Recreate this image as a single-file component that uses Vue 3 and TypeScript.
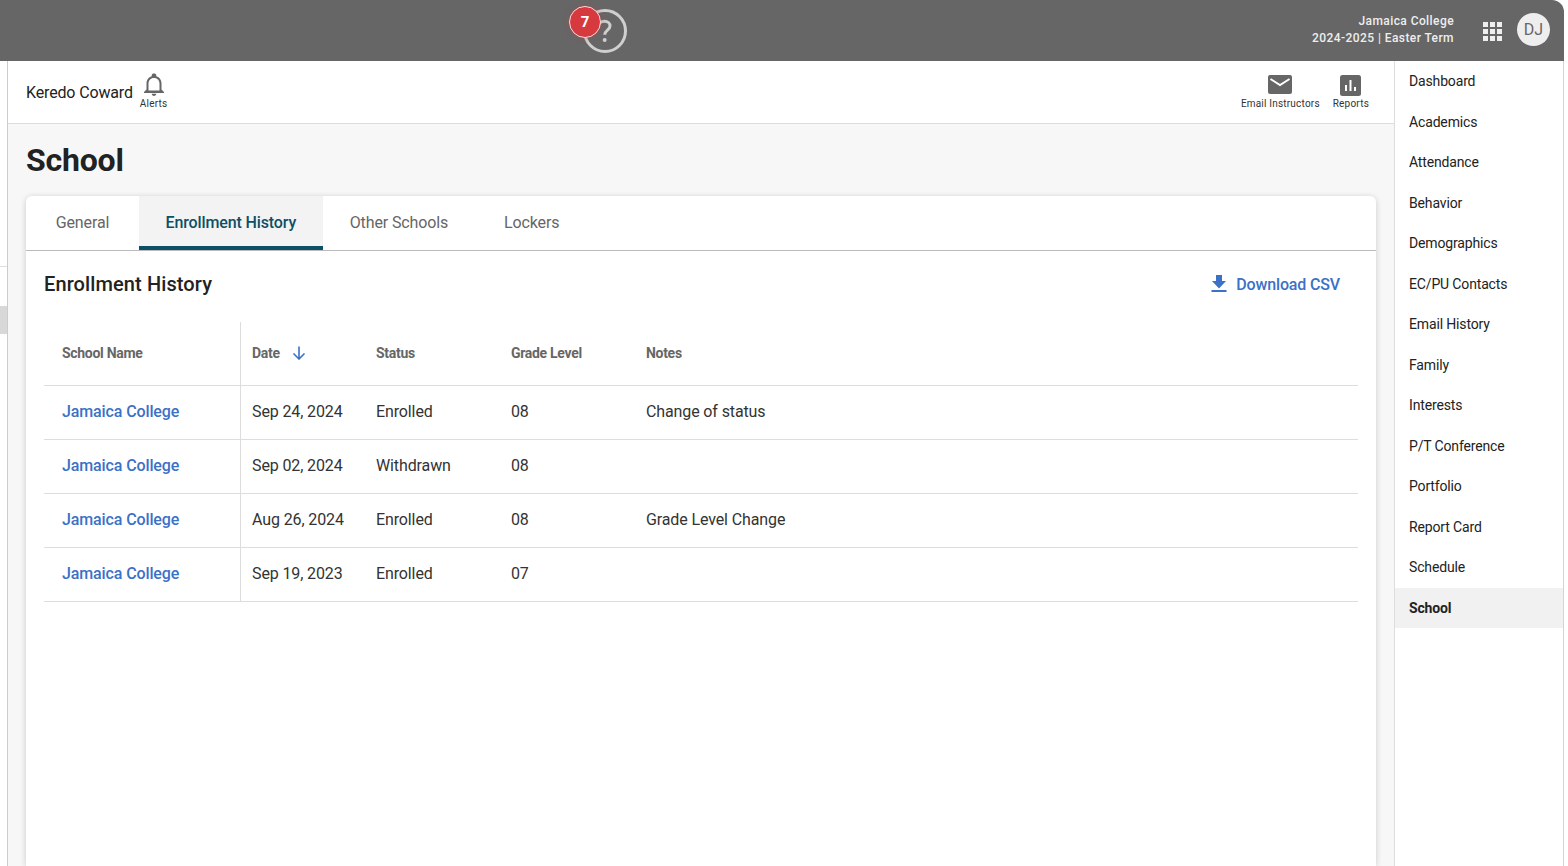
<script setup lang="ts">
interface Row { date: string; status: string; grade: string; notes: string }
const nav: string[] = ['Dashboard','Academics','Attendance','Behavior','Demographics','EC/PU Contacts','Email History','Family','Interests','P/T Conference','Portfolio','Report Card','Schedule','School']
const tabs: string[] = ['General','Enrollment History','Other Schools','Lockers']
const rows: Row[] = [
  { date: 'Sep 24, 2024', status: 'Enrolled', grade: '08', notes: 'Change of status' },
  { date: 'Sep 02, 2024', status: 'Withdrawn', grade: '08', notes: '' },
  { date: 'Aug 26, 2024', status: 'Enrolled', grade: '08', notes: 'Grade Level Change' },
  { date: 'Sep 19, 2023', status: 'Enrolled', grade: '07', notes: '' },
]
</script>

<template>
  <div class="app">
    <header class="topbar">
      <div class="help">
        <svg class="help-icon" width="46" height="46" viewBox="0 0 46 46">
          <circle cx="23" cy="23" r="20.5" fill="none" stroke="#cfcfcf" stroke-width="3" />
          <path d="M16.500 19c0-3.400 2.700-5.700 6-5.700 3.200 0 5.500 2 5.500 4.800 0 3.900-5.300 4.100-5.300 8.600" fill="none" stroke="#cfcfcf" stroke-width="3" />
          <circle cx="22.700" cy="32" r="2" fill="#cfcfcf" />
        </svg>
        <span class="badge">7</span>
      </div>
      <div class="term">
        <div>Jamaica College</div>
        <div>2024-2025 | Easter Term</div>
      </div>
      <svg class="apps" width="19" height="19" viewBox="0 0 19 19" fill="#eeeeee">
        <rect x="0" y="0" width="5" height="5" /><rect x="7" y="0" width="5" height="5" /><rect x="14" y="0" width="5" height="5" />
        <rect x="0" y="7" width="5" height="5" /><rect x="7" y="7" width="5" height="5" /><rect x="14" y="7" width="5" height="5" />
        <rect x="0" y="14" width="5" height="5" /><rect x="7" y="14" width="5" height="5" /><rect x="14" y="14" width="5" height="5" />
      </svg>
      <div class="avatar">DJ</div>
    </header>

    <div class="body">
      <div class="rail">
        <div class="rail-top"></div>
        <div class="rail-block"></div>
      </div>

      <main class="main">
        <div class="student">
          <span class="student-name">Keredo Coward</span>
          <div class="action alerts">
            <svg width="24" height="24" viewBox="0 0 24 24" fill="#666666">
              <path d="M12 23c1.300 0 2.300-1 2.300-2.200H9.700C9.700 22 10.700 23 12 23zm7.500-6.500v-6c0-3.500-1.900-6.500-5.200-7.300V2.500C14.300 1.100 13.300.5 12 .5s-2.300.6-2.300 2v.7c-3.300.8-5.200 3.800-5.200 7.300v6L2 19v1h20v-1l-2.500-2.500zm-2 1H6.500v-7c0-3 1.900-5.500 5.500-5.500s5.500 2.500 5.500 5.500v7z" />
            </svg>
            <span>Alerts</span>
          </div>
          <div class="spacer"></div>
          <div class="action email">
            <svg width="24" height="19" viewBox="0 0 24 19">
              <rect width="24" height="19" rx="2" fill="#666666" />
              <path d="M2.500 4 12 10l9.500-6" fill="none" stroke="#ffffff" stroke-width="2" />
            </svg>
            <span>Email Instructors</span>
          </div>
          <div class="action reports">
            <svg width="21" height="21" viewBox="0 0 21 21">
              <rect width="21" height="21" rx="2.500" fill="#666666" />
              <rect x="5" y="10" width="2" height="6" fill="#ffffff" />
              <rect x="9.500" y="5" width="2" height="11" fill="#ffffff" />
              <rect x="14" y="12" width="2" height="4" fill="#ffffff" />
            </svg>
            <span>Reports</span>
          </div>
        </div>

        <h1 class="title">School</h1>

        <section class="card">
          <nav class="tabs">
            <div v-for="t in tabs" :key="t" class="tab" :class="{ active: t === 'Enrollment History' }">{{ t }}</div>
          </nav>
          <div class="content">
            <div class="content-head">
              <h2>Enrollment History</h2>
              <a class="download">
                <svg width="16" height="17" viewBox="0 0 16 17" fill="#3b71c6">
                  <path d="M5 0h6v6h4l-7 7.500L1 6h4z" /><rect x="0.500" y="15" width="15" height="2" />
                </svg>
                Download CSV
              </a>
            </div>
            <table class="grid">
              <colgroup>
                <col class="c1" /><col class="c2" /><col class="c3" /><col class="c4" /><col />
              </colgroup>
              <thead>
                <tr>
                  <th class="first">School Name</th>
                  <th>
                    <span class="date-head">Date
                      <svg width="14" height="14" viewBox="0 0 14 14" fill="none" stroke="#3b71c6" stroke-width="1.600">
                        <path d="M7 .5v12M1.500 7.500 7 13l5.500-5.500" />
                      </svg>
                    </span>
                  </th>
                  <th>Status</th>
                  <th>Grade Level</th>
                  <th>Notes</th>
                </tr>
              </thead>
              <tbody>
                <tr v-for="r in rows" :key="r.date">
                  <td class="first link">Jamaica College</td>
                  <td>{{ r.date }}</td>
                  <td>{{ r.status }}</td>
                  <td>{{ r.grade }}</td>
                  <td>{{ r.notes }}</td>
                </tr>
              </tbody>
            </table>
          </div>
        </section>
      </main>

      <aside class="side">
        <div v-for="n in nav" :key="n" class="side-item" :class="{ current: n === 'School' }">{{ n }}</div>
      </aside>
    </div>
  </div>
</template>

<style>
html, body { margin: 0; background: #ffffff; overflow: hidden; }
</style>

<style scoped>
.app {
  width: 1568px;
  height: 866px;
  display: flex;
  flex-direction: column;
  overflow: hidden;
  font-family: Roboto, "Liberation Sans", sans-serif;
  color: #222222;
}
.topbar {
  height: 61px;
  flex: none;
  width: 1564px;
  background: #666666;
  border-top-right-radius: 12px;
  display: flex;
  align-items: center;
  box-sizing: border-box;
  padding-right: 14px;
}
.help {
  position: relative;
  margin-left: 582px;
  margin-top: 1px;
  width: 46px;
  height: 46px;
  flex: none;
}
.help-icon { display: block; }
.badge {
  position: absolute;
  left: -13px;
  top: -2px;
  width: 30px;
  height: 30px;
  border-radius: 50%;
  background: #d6393e;
  border: 1px solid #f4dcdc;
  color: #ffffff;
  font-weight: 700;
  font-size: 15px;
  display: flex;
  align-items: center;
  justify-content: center;
  box-shadow: 0 0 6px rgba(216, 54, 60, .35);
}
.term {
  margin-left: auto;
  margin-top: -2px;
  text-align: right;
  color: #eeeeee;
  font-size: 12px;
  font-weight: 500;
  line-height: 17px;
  letter-spacing: .42px;
}
.apps { margin-left: 29px; flex: none; margin-top: 1px; }
.avatar {
  width: 33px;
  height: 33px;
  margin-left: 15px;
  margin-top: -2px;
  border-radius: 50%;
  background: #eeeeee;
  color: #666666;
  font-size: 16px;
  display: flex;
  align-items: center;
  justify-content: center;
  flex: none;
}
.body {
  flex: 1;
  min-height: 0;
  display: flex;
  width: 1564px;
  border-right: 1px solid #d4d4d4;
  box-sizing: border-box;
}
.rail {
  width: 8px;
  flex: none;
  box-sizing: border-box;
  border-right: 1px solid #cccccc;
  background: #ffffff;
}
.rail-top { height: 205px; border-bottom: 1px solid #dddddd; }
.rail-block { height: 28px; margin-top: 39px; background: #d8d8d8; }
.main {
  width: 1386px;
  flex: none;
  background: #f7f7f7;
  display: flex;
  flex-direction: column;
  min-height: 0;
}
.student {
  height: 63px;
  flex: none;
  box-sizing: border-box;
  background: #ffffff;
  border-bottom: 1px solid #dddddd;
  display: flex;
  align-items: flex-start;
  padding-left: 18px;
  padding-right: 25px;
}
.student-name { font-size: 16px; line-height: 19px; margin-top: 22px; color: #222222; letter-spacing: -.15px; }
.spacer { flex: 1; }
.action {
  display: flex;
  flex-direction: column;
  align-items: center;
  font-size: 10px;
  line-height: 12px;
  color: #333333;
  letter-spacing: .2px;
}
.action svg { display: block; }
.alerts { margin-left: 7px; margin-top: 12px; }
.alerts span { margin-top: 1px; }
.email { margin-top: 14px; }
.email span { margin-top: 4px; }
.reports { margin-left: 13px; margin-top: 14px; }
.reports span { margin-top: 2px; }
.title {
  margin: 0;
  padding: 17px 0 17px 18px;
  height: 38px;
  font-size: 32px;
  line-height: 38px;
  font-weight: 700;
  letter-spacing: -.2px;
  color: #222222;
  flex: none;
}
.card {
  margin: 0 18px;
  flex: 1;
  background: #ffffff;
  border-radius: 6px 6px 0 0;
  box-shadow: 0 1px 6px rgba(0, 0, 0, .18);
  display: flex;
  flex-direction: column;
}
.tabs {
  display: flex;
  height: 55px;
  flex: none;
  box-sizing: border-box;
  border-bottom: 1px solid #bbbbbb;
}
.tab {
  min-width: 113px;
  padding: 0 27px;
  box-sizing: border-box;
  text-align: center;
  font-size: 16px;
  line-height: 54px;
  letter-spacing: -.12px;
  color: #666666;
}
.tab:first-child { border-top-left-radius: 6px; }
.tab.active {
  background: #f3f3f3;
  color: #0d4f66;
  font-weight: 500;
  height: 54px;
  padding: 0 26.500px;
  border-bottom: 4px solid #0d4f66;
}
.content { padding: 0 18px; }
.content-head {
  height: 71px;
  display: flex;
  align-items: center;
  justify-content: space-between;
  padding-right: 18px;
  padding-bottom: 6px;
  box-sizing: border-box;
}
h2 { margin: 0; font-size: 20px; font-weight: 500; color: #222222; line-height: 24px; letter-spacing: .11px; }
.download {
  display: flex;
  align-items: center;
  gap: 9px;
  margin-top: 2px;
  color: #3b71c6;
  font-size: 16px;
  font-weight: 500;
  letter-spacing: -.15px;
}
.download svg { margin-top: -2px; }
.grid {
  width: 1314px;
  border-collapse: separate;
  border-spacing: 0;
  table-layout: fixed;
}
.c1 { width: 197px; }
.c2 { width: 124px; }
.c3 { width: 135px; }
.c4 { width: 135px; }
th {
  height: 64px;
  box-sizing: border-box;
  text-align: left;
  padding: 0 11px 2px;
  font-size: 14px;
  font-weight: 700;
  letter-spacing: -.3px;
  color: #666666;
  border-bottom: 1px solid #dddddd;
}
td {
  height: 54px;
  box-sizing: border-box;
  padding: 0 11px 2px;
  font-size: 16px;
  letter-spacing: -.12px;
  color: #333333;
  border-bottom: 1px solid #dddddd;
}
th.first, td.first { padding-left: 18px; border-right: 1px solid #dddddd; }
.link { color: #3b71c6; font-weight: 500; }
.date-head { display: inline-flex; align-items: center; gap: 12px; }
.side {
  flex: 1;
  background: #ffffff;
  border-left: 1px solid #dddddd;
}
.side-item {
  height: 40.500px;
  line-height: 40.500px;
  padding-left: 14px;
  font-size: 14px;
  letter-spacing: -.15px;
  color: #222222;
}
.side-item.current { background: #f1f1f1; font-weight: 700; }
</style>
